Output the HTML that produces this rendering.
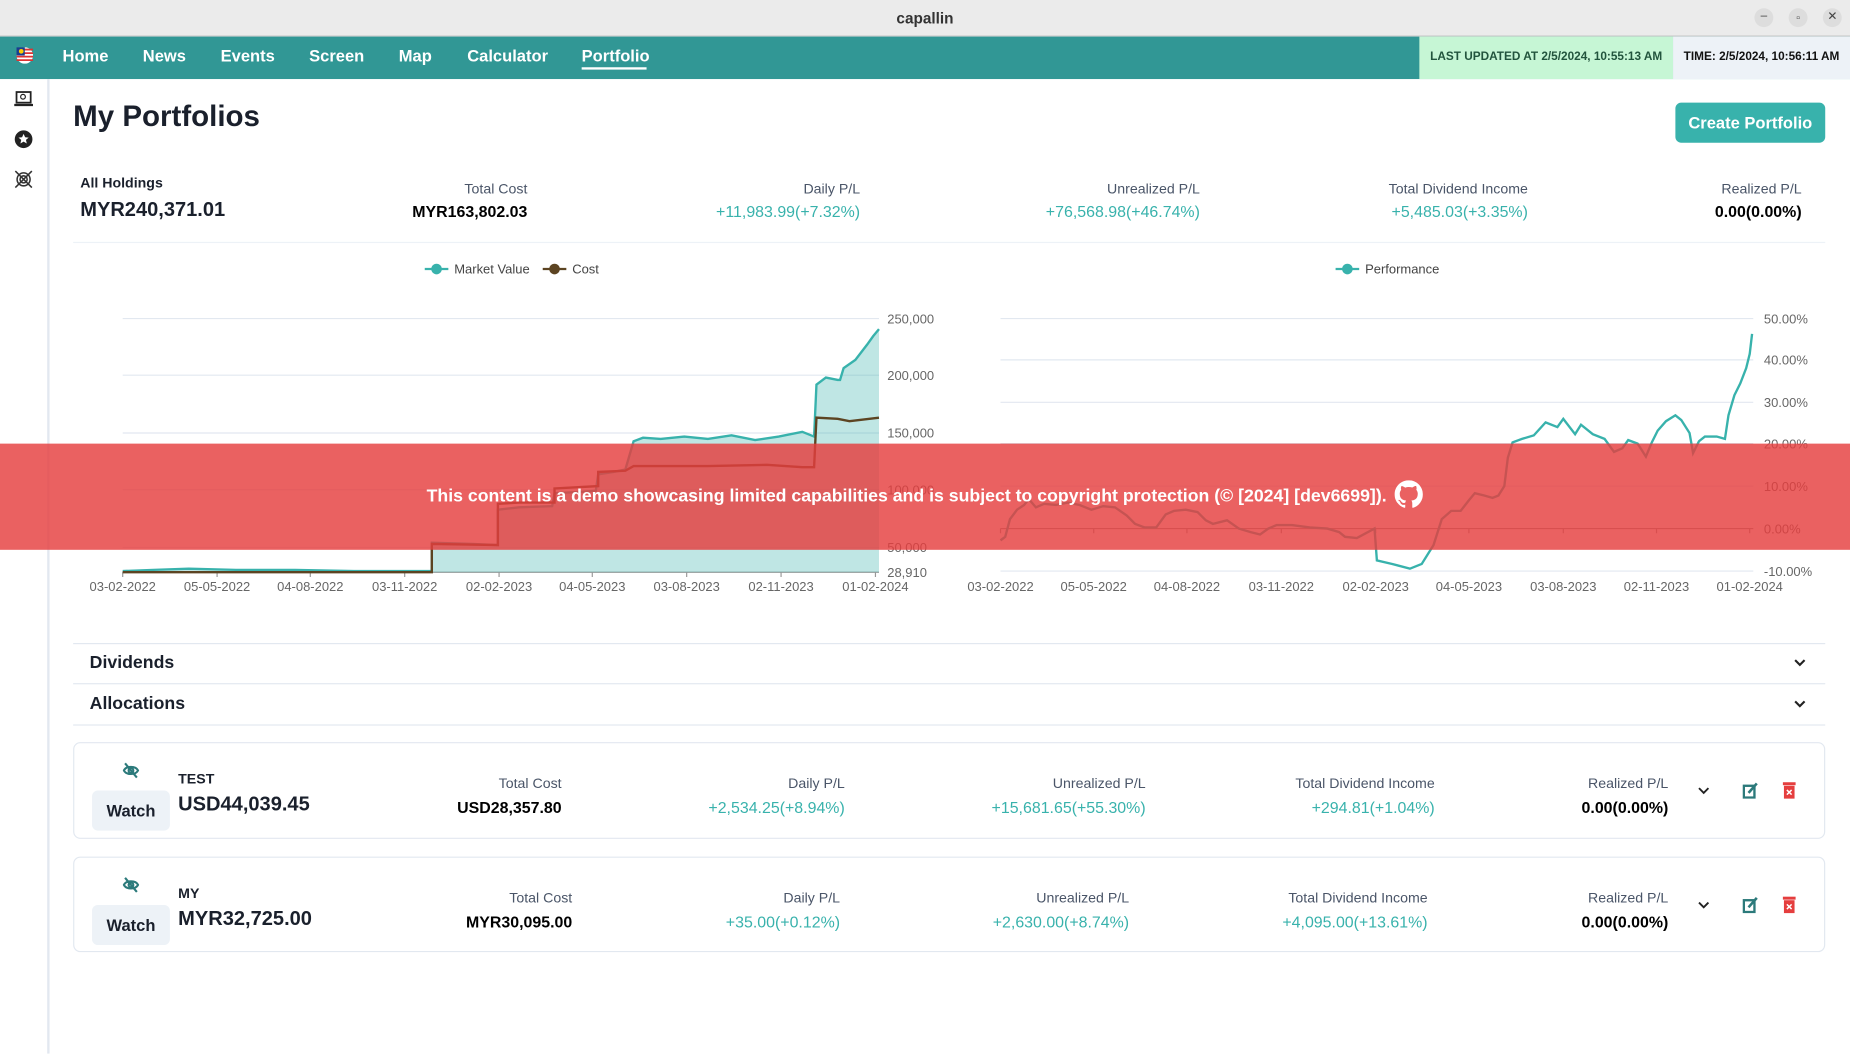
<!DOCTYPE html>
<html><head><meta charset="utf-8"><style>
*{box-sizing:border-box;margin:0;padding:0}
html,body{width:1850px;height:1053px;overflow:hidden;background:#fff;font-family:"Liberation Sans",Arial,sans-serif;color:#1a202c}
#w{position:absolute;left:0;top:0;width:1568px;height:892.5px;transform:scale(1.17985);transform-origin:0 0}
.a{position:absolute;white-space:nowrap}
.lbl{font-size:12px;color:#4a5568}
.val{font-size:13.5px;font-weight:bold;color:#000}
.g{font-size:13.5px;color:#38b2ac}
.r{text-align:right}
.nav a{position:absolute;top:39px;color:#fff;font-weight:bold;font-size:14px;text-decoration:none}
.card{position:absolute;left:62px;width:1485px;border:1px solid #e2e8f0;border-radius:6px}
.watch{position:absolute;left:15px;width:66px;height:34px;background:#edf2f7;border-radius:5px;font-weight:bold;font-size:14px;text-align:center;line-height:34px}
</style></head><body><div id="w">
<div class="a" style="left:0;top:0;width:1568px;height:31px;background:#ebebeb;border-bottom:1px solid #ccc"></div>
<div class="a" style="left:0;top:8px;width:1568px;text-align:center;font-size:13px;font-weight:bold;color:#333">capallin</div>
<div class="a" style="left:1487px;top:7px;width:16px;height:16px;border-radius:8px;background:#ddd;font-size:10px;text-align:center;line-height:14px;color:#444">–</div>
<div class="a" style="left:1516px;top:7px;width:16px;height:16px;border-radius:8px;background:#ddd;font-size:9px;text-align:center;line-height:16px;color:#444">▫</div>
<div class="a" style="left:1545px;top:7px;width:16px;height:16px;border-radius:8px;background:#ddd;font-size:10px;text-align:center;line-height:16px;color:#444">✕</div>
<div class="a nav" style="left:0;top:31px;width:1568px;height:36px;background:#319795"></div>
<div class="nav">
<svg class="a" style="left:14px;top:40px" width="14" height="14" viewBox="0 0 14 14"><circle cx="7" cy="7" r="7" fill="#fff"/><path d="M0 2h14M0 5h14M0 8h14M0 11h14" stroke="#d33" stroke-width="1.5"/><rect x="0" y="0" width="7" height="7" fill="#1a3d8f"/><circle cx="4" cy="3.5" r="2" fill="#fc0"/></svg>
<a style="left:53px">Home</a><a style="left:121px">News</a><a style="left:187px">Events</a><a style="left:262px">Screen</a><a style="left:338px">Map</a><a style="left:396px">Calculator</a><a style="left:493px">Portfolio</a>
</div>
<div class="a" style="left:493px;top:57px;width:55px;height:2px;background:#fff"></div>
<div class="a" style="left:1203px;top:31px;width:215px;height:36px;background:#c6f6d5;font-size:10px;font-weight:bold;color:#22543d;line-height:36px;text-align:center">LAST UPDATED AT 2/5/2024, 10:55:13 AM</div>
<div class="a" style="left:1418px;top:31px;width:150px;height:36px;background:#edf2f7;font-size:10px;font-weight:bold;color:#111;line-height:36px;text-align:center">TIME: 2/5/2024, 10:56:11 AM</div>
<div class="a" style="left:40px;top:67px;width:2px;height:826px;background:#e2e8f0"></div>
<svg class="a" style="left:12px;top:77px" width="16" height="14" viewBox="0 0 16 14"><rect x="2" y="1" width="12" height="9" fill="none" stroke="#222" stroke-width="1.5"/><path d="M0 12h16" stroke="#222" stroke-width="2"/><circle cx="7.5" cy="5" r="2" fill="none" stroke="#222"/></svg>
<svg class="a" style="left:12px;top:110px" width="16" height="16" viewBox="0 0 16 16"><circle cx="8" cy="8" r="7.5" fill="#222"/><path d="M8 3.5l1.3 2.8 3 .3-2.3 2 .7 3L8 10l-2.7 1.6.7-3-2.3-2 3-.3z" fill="#fff"/></svg>
<svg class="a" style="left:12px;top:144px" width="16" height="16" viewBox="0 0 16 16" fill="none" stroke="#333" stroke-width="1.3"><path d="M1 1l14 14M15 1L1 15"/><circle cx="8" cy="8" r="3"/><circle cx="8" cy="8" r="5.5"/></svg>
<div class="a" style="left:62px;top:85px;font-size:25px;font-weight:bold">My Portfolios</div>
<div class="a" style="left:1420px;top:87px;width:127px;height:34px;background:#38b2ac;border-radius:5px;color:#fff;font-weight:bold;font-size:14px;text-align:center;line-height:34px">Create Portfolio</div>
<div class="a" style="left:68px;top:148px;font-size:12px;font-weight:bold">All Holdings</div>
<div class="a" style="left:68px;top:168px;font-size:17px;font-weight:bold">MYR240,371.01</div>
<div class="a lbl r" style="right:1121px;top:153px">Total Cost</div><div class="a val r" style="right:1121px;top:172px">MYR163,802.03</div>
<div class="a lbl r" style="right:839px;top:153px">Daily P/L</div><div class="a g r" style="right:839px;top:172px">+11,983.99(+7.32%)</div>
<div class="a lbl r" style="right:551px;top:153px">Unrealized P/L</div><div class="a g r" style="right:551px;top:172px">+76,568.98(+46.74%)</div>
<div class="a lbl r" style="right:273px;top:153px">Total Dividend Income</div><div class="a g r" style="right:273px;top:172px">+5,485.03(+3.35%)</div>
<div class="a lbl r" style="right:41px;top:153px">Realized P/L</div><div class="a val r" style="right:41px;top:172px">0.00(0.00%)</div>
<div class="a" style="left:62px;top:205px;width:1485px;height:1px;background:#edf2f7"></div>
<svg class="a" style="left:0;top:0" width="1568" height="520" viewBox="0 0 1568 520" font-family="Liberation Sans, Arial, sans-serif" font-size="11" fill="#666">
<g><path d="M360 228h20" stroke="#38b2ac" stroke-width="2"/><circle cx="370" cy="228" r="4.5" fill="#38b2ac"/><text x="385" y="232" fill="#444">Market Value</text>
<path d="M460 228h20" stroke="#5c4422" stroke-width="2"/><circle cx="470" cy="228" r="4.5" fill="#5c4422"/><text x="485" y="232" fill="#444">Cost</text>
<path d="M1132 228h20" stroke="#38b2ac" stroke-width="2"/><circle cx="1142" cy="228" r="4.5" fill="#38b2ac"/><text x="1157" y="232" fill="#444">Performance</text></g>
<g stroke="#e2e8f0" stroke-width="1"><path d="M104 270H745M104 318H745M104 367H745M104 415H745M104 464H745"/>
<path d="M848 270H1486M848 305H1486M848 341H1486M848 376H1486M848 412H1486M848 484H1486"/></g>
<path d="M104 485H745M848 448H1486" stroke="#999" stroke-width="1"/>
<g stroke="#999"><path d="M104 485v4M184 485v4M263 485v4M343 485v4M423 485v4M502 485v4M582 485v4M662 485v4M742 485v4M848 448v4M927 448v4M1006 448v4M1086 448v4M1166 448v4M1245 448v4M1325 448v4M1404 448v4M1483 448v4"/></g>
<path d="M104 484L130 483 160 482 200 483 250 483 300 484 366 484 366 460 400 461 422 462 422 432 440 430 468 429 470 418 490 417 505 416 507 402 520 400 530 398 537 374 545 371 560 372 580 370 600 372 620 369 640 373 660 370 680 366 690 370 692 326 700 320 710 322 712 322 715 312 725 305 735 292 740 285 745 279 745 485 104 485Z" fill="#38b2ac" fill-opacity="0.32"/>
<path d="M104 484L130 483 160 482 200 483 250 483 300 484 366 484 366 460 400 461 422 462 422 432 440 430 468 429 470 418 490 417 505 416 507 402 520 400 530 398 537 374 545 371 560 372 580 370 600 372 620 369 640 373 660 370 680 366 690 370 692 326 700 320 710 322 712 322 715 312 725 305 735 292 740 285 745 279" fill="none" stroke="#38b2ac" stroke-width="2"/>
<path d="M104 485L366 485 366 461 422 462 422 427 440 426 470 426 470 414 507 412 507 400 530 399 537 395 560 395 600 395 650 394 680 396 690 396 692 354 710 355 720 357 745 354" fill="none" stroke="#5c4422" stroke-width="2"/>
<path d="M848 458L852 455 856 440 862 432 868 428 872 423 878 430 885 427 895 428 905 426 915 428 925 432 935 429 945 430 955 437 962 444 970 447 980 447 988 436 995 433 1005 432 1015 434 1022 441 1028 444 1040 441 1050 448 1060 451 1068 453 1075 448 1082 445 1095 445 1110 447 1125 448 1135 451 1140 455 1150 456 1165 448 1167 475 1180 478 1195 482 1205 478 1210 470 1215 462 1222 440 1230 433 1238 433 1245 424 1250 418 1258 420 1265 422 1270 420 1275 412 1278 388 1282 375 1290 372 1300 369 1310 358 1320 362 1325 355 1335 368 1340 360 1350 368 1360 372 1368 383 1375 380 1380 373 1388 376 1395 387 1400 375 1405 365 1412 357 1420 352 1425 356 1432 367 1435 384 1440 374 1445 370 1455 370 1462 372 1465 352 1470 335 1475 325 1480 312 1483 300 1485 283" fill="none" stroke="#38b2ac" stroke-width="2"/>
<g><text x="752" y="274">250,000</text><text x="752" y="322">200,000</text><text x="752" y="371">150,000</text><text x="752" y="419">100,000</text><text x="752" y="468">50,000</text><text x="752" y="489">28,910</text>
<text x="1495" y="274">50.00%</text><text x="1495" y="309">40.00%</text><text x="1495" y="345">30.00%</text><text x="1495" y="380">20.00%</text><text x="1495" y="416">10.00%</text><text x="1495" y="452">0.00%</text><text x="1495" y="488">-10.00%</text></g>
<g text-anchor="middle"><text x="104" y="501">03-02-2022</text><text x="184" y="501">05-05-2022</text><text x="263" y="501">04-08-2022</text><text x="343" y="501">03-11-2022</text><text x="423" y="501">02-02-2023</text><text x="502" y="501">04-05-2023</text><text x="582" y="501">03-08-2023</text><text x="662" y="501">02-11-2023</text><text x="742" y="501">01-02-2024</text>
<text x="848" y="501">03-02-2022</text><text x="927" y="501">05-05-2022</text><text x="1006" y="501">04-08-2022</text><text x="1086" y="501">03-11-2022</text><text x="1166" y="501">02-02-2023</text><text x="1245" y="501">04-05-2023</text><text x="1325" y="501">03-08-2023</text><text x="1404" y="501">02-11-2023</text><text x="1483" y="501">01-02-2024</text></g>
</svg>
<div class="a" style="left:0;top:376px;width:1568px;height:90px;background:rgba(229,62,62,0.82)"></div>
<div class="a" style="left:0;top:407px;width:1568px;text-align:center;color:#fff;font-weight:bold;font-size:15px">This content is a demo showcasing limited capabilities and is subject to copyright protection (© [2024] [dev6699]). <svg width="24" height="24" viewBox="0 0 16 16" style="vertical-align:-6px;margin-left:3px"><path fill="#fff" d="M8 0C3.58 0 0 3.58 0 8c0 3.54 2.29 6.53 5.470 7.59.4.07.55-.17.55-.38v-1.33c-2.23.48-2.7-1.07-2.7-1.07-.36-.92-.89-1.17-.89-1.17-.73-.5.06-.49.06-.49.8.06 1.230.83 1.230.83.72 1.22 1.870.87 2.330.66.07-.52.28-.87.51-1.07-1.78-.2-3.64-.89-3.64-3.95 0-.87.31-1.59.82-2.15-.08-.2-.36-1.02.08-2.12 0 0 .67-.21 2.2.82A7.6 7.6 0 0 1 8 3.87c.68 0 1.36.09 2 .27 1.53-1.04 2.2-.82 2.2-.82.44 1.1.16 1.92.08 2.12.51.56.82 1.27.82 2.15 0 3.07-1.87 3.75-3.65 3.95.29.25.54.73.54 1.48v2.2c0 .21.15.46.55.38A8 8 0 0 0 16 8c0-4.42-3.58-8-8-8z"/></svg></div>
<div class="a" style="left:62px;top:545px;width:1485px;height:35px;border-top:1px solid #e2e8f0;border-bottom:1px solid #e2e8f0"></div>
<div class="a" style="left:62px;top:614px;width:1485px;height:1px;background:#e2e8f0"></div>
<div class="a" style="left:76px;top:553px;font-size:15px;font-weight:bold">Dividends</div>
<div class="a" style="left:76px;top:588px;font-size:15px;font-weight:bold">Allocations</div>
<svg class="a" style="left:1520px;top:558px" width="11" height="8" viewBox="0 0 11 8"><path d="M1.5 1.5l4 4 4-4" stroke="#222" stroke-width="1.8" fill="none"/></svg>
<svg class="a" style="left:1520px;top:593px" width="11" height="8" viewBox="0 0 11 8"><path d="M1.5 1.5l4 4 4-4" stroke="#222" stroke-width="1.8" fill="none"/></svg>
<div class="card" style="top:629px;height:82px">
<svg class="a" style="left:41px;top:16px" width="14" height="14" viewBox="0 0 14 14" fill="none" stroke="#2c7a7b" stroke-width="1.8"><path d="M1 7c2-4 10-4 12 0-2 4-10 4-12 0z"/><circle cx="7" cy="7" r="2"/><path d="M2 1l10 12"/></svg>
<div class="watch" style="top:40px">Watch</div>
<div class="a" style="left:88px;top:23px;font-size:12px;font-weight:bold">TEST</div>
<div class="a" style="left:88px;top:42px;font-size:17px;font-weight:bold">USD44,039.45</div>
<div class="a lbl r" style="right:1070px;top:27px">Total Cost</div><div class="a val r" style="right:1070px;top:47px">USD28,357.80</div>
<div class="a lbl r" style="right:830px;top:27px">Daily P/L</div><div class="a g r" style="right:830px;top:47px">+2,534.25(+8.94%)</div>
<div class="a lbl r" style="right:575px;top:27px">Unrealized P/L</div><div class="a g r" style="right:575px;top:47px">+15,681.65(+55.30%)</div>
<div class="a lbl r" style="right:330px;top:27px">Total Dividend Income</div><div class="a g r" style="right:330px;top:47px">+294.81(+1.04%)</div>
<div class="a lbl r" style="right:132px;top:27px">Realized P/L</div><div class="a val r" style="right:132px;top:47px">0.00(0.00%)</div>
<svg class="a" style="left:1376px;top:37px" width="10" height="7" viewBox="0 0 10 7"><path d="M1 1l4 4 4-4" stroke="#222" stroke-width="1.6" fill="none"/></svg>
<svg class="a" style="left:1414px;top:33px" width="13" height="14" viewBox="0 0 13 14"><rect x="1" y="3" width="9" height="10" fill="none" stroke="#2c7a7b" stroke-width="2"/><path d="M5 9l7-8" stroke="#2c7a7b" stroke-width="2.2"/></svg>
<svg class="a" style="left:1448px;top:32px" width="11" height="15" viewBox="0 0 11 15"><rect x="0" y="1" width="11" height="2.5" fill="#e53e3e"/><rect x="1" y="4" width="9" height="11" fill="#e53e3e"/><path d="M3.5 7.5l4 4M7.5 7.5l-4 4" stroke="#fff" stroke-width="1.3"/></svg>
</div>
<div class="card" style="top:726px;height:81px">
<svg class="a" style="left:41px;top:16px" width="14" height="14" viewBox="0 0 14 14" fill="none" stroke="#2c7a7b" stroke-width="1.8"><path d="M1 7c2-4 10-4 12 0-2 4-10 4-12 0z"/><circle cx="7" cy="7" r="2"/><path d="M2 1l10 12"/></svg>
<div class="watch" style="top:40px">Watch</div>
<div class="a" style="left:88px;top:23px;font-size:12px;font-weight:bold">MY</div>
<div class="a" style="left:88px;top:42px;font-size:17px;font-weight:bold">MYR32,725.00</div>
<div class="a lbl r" style="right:1061px;top:27px">Total Cost</div><div class="a val r" style="right:1061px;top:47px">MYR30,095.00</div>
<div class="a lbl r" style="right:834px;top:27px">Daily P/L</div><div class="a g r" style="right:834px;top:47px">+35.00(+0.12%)</div>
<div class="a lbl r" style="right:589px;top:27px">Unrealized P/L</div><div class="a g r" style="right:589px;top:47px">+2,630.00(+8.74%)</div>
<div class="a lbl r" style="right:336px;top:27px">Total Dividend Income</div><div class="a g r" style="right:336px;top:47px">+4,095.00(+13.61%)</div>
<div class="a lbl r" style="right:132px;top:27px">Realized P/L</div><div class="a val r" style="right:132px;top:47px">0.00(0.00%)</div>
<svg class="a" style="left:1376px;top:37px" width="10" height="7" viewBox="0 0 10 7"><path d="M1 1l4 4 4-4" stroke="#222" stroke-width="1.6" fill="none"/></svg>
<svg class="a" style="left:1414px;top:33px" width="13" height="14" viewBox="0 0 13 14"><rect x="1" y="3" width="9" height="10" fill="none" stroke="#2c7a7b" stroke-width="2"/><path d="M5 9l7-8" stroke="#2c7a7b" stroke-width="2.2"/></svg>
<svg class="a" style="left:1448px;top:32px" width="11" height="15" viewBox="0 0 11 15"><rect x="0" y="1" width="11" height="2.5" fill="#e53e3e"/><rect x="1" y="4" width="9" height="11" fill="#e53e3e"/><path d="M3.5 7.5l4 4M7.5 7.5l-4 4" stroke="#fff" stroke-width="1.3"/></svg>
</div>
</div></body></html>
